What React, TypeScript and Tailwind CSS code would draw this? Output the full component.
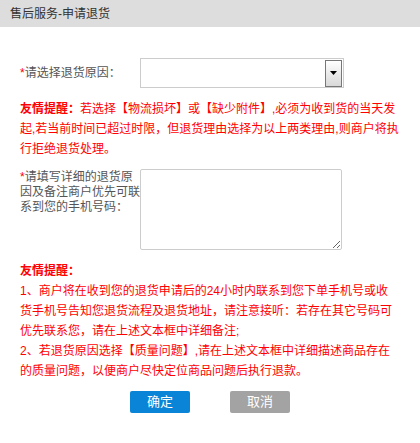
export default function App() {
  const font = { fontFamily: '"Liberation Sans", "Noto Sans CJK SC", sans-serif' };

  return (
    <div className="w-[420px] h-[443px] bg-white text-[12px]" style={font}>
      <div className="h-[27px] bg-[#dddddd] flex items-center px-[10px] text-[12px] text-[#333]">
        售后服务-申请退货
      </div>

      <div className="px-5 pt-[31px]">
        <div className="flex items-center">
          <label className="w-[120px] text-[#555] leading-[30px]">
            <span className="text-[#f00]">*</span>请选择退货原因：
          </label>
          <div className="w-[204px] h-[30px] border border-[#ccc] flex justify-end items-center pr-px">
            <div className="w-[17px] h-[27px] border border-[#777] bg-gradient-to-b from-white to-[#d8d8d8] flex items-center justify-center">
              <svg width="7" height="4" viewBox="0 0 7 4">
                <path d="M0 0H7L3.5 4Z" fill="#000" />
              </svg>
            </div>
          </div>
        </div>

        <p className="mt-[11px] text-[#f00] leading-[20px]">
          <span className="block whitespace-nowrap">
            <b>友情提醒：</b>若选择【物流损坏】或【缺少附件】,必须为收到货的当天发
          </span>
          <span className="block whitespace-nowrap">起,若当前时间已超过时限，但退货理由选择为以上两类理由,则商户将执</span>
          <span className="block whitespace-nowrap">行拒绝退货处理。</span>
        </p>

        <div className="flex items-start mt-[10px]">
          <label className="w-[120px] text-[#555] leading-[15px] pt-px">
            <span className="text-[#f00]">*</span>请填写详细的退货原
            <br />
            因及备注商户优先可联
            <br />
            系到您的手机号码：
          </label>
          <textarea className="w-[202px] h-[81px] border border-[#ccc] rounded-[2px] bg-white outline-none" />
        </div>

        <div className="mt-[11px] text-[#f00] leading-[20px]">
          <div className="font-bold">友情提醒：</div>
          <div className="whitespace-nowrap">1、商户将在收到您的退货申请后的24小时内联系到您下单手机号或收</div>
          <div className="whitespace-nowrap">货手机号告知您退货流程及退货地址，请注意接听：若存在其它号码可</div>
          <div className="whitespace-nowrap">优先联系您，请在上述文本框中详细备注;</div>
          <div className="whitespace-nowrap">2、若退货原因选择【质量问题】,请在上述文本框中详细描述商品存在</div>
          <div className="whitespace-nowrap">的质量问题，以便商户尽快定位商品问题后执行退款。</div>
        </div>

        <div className="mt-[10px] flex justify-center gap-10">
          <button className="w-[60px] h-[22px] rounded-[2px] bg-[#0a84d6] text-white text-[13px]">确定</button>
          <button className="w-[60px] h-[22px] rounded-[2px] bg-[#a3a3a3] text-white text-[13px]">取消</button>
        </div>
      </div>
    </div>
  );
}
